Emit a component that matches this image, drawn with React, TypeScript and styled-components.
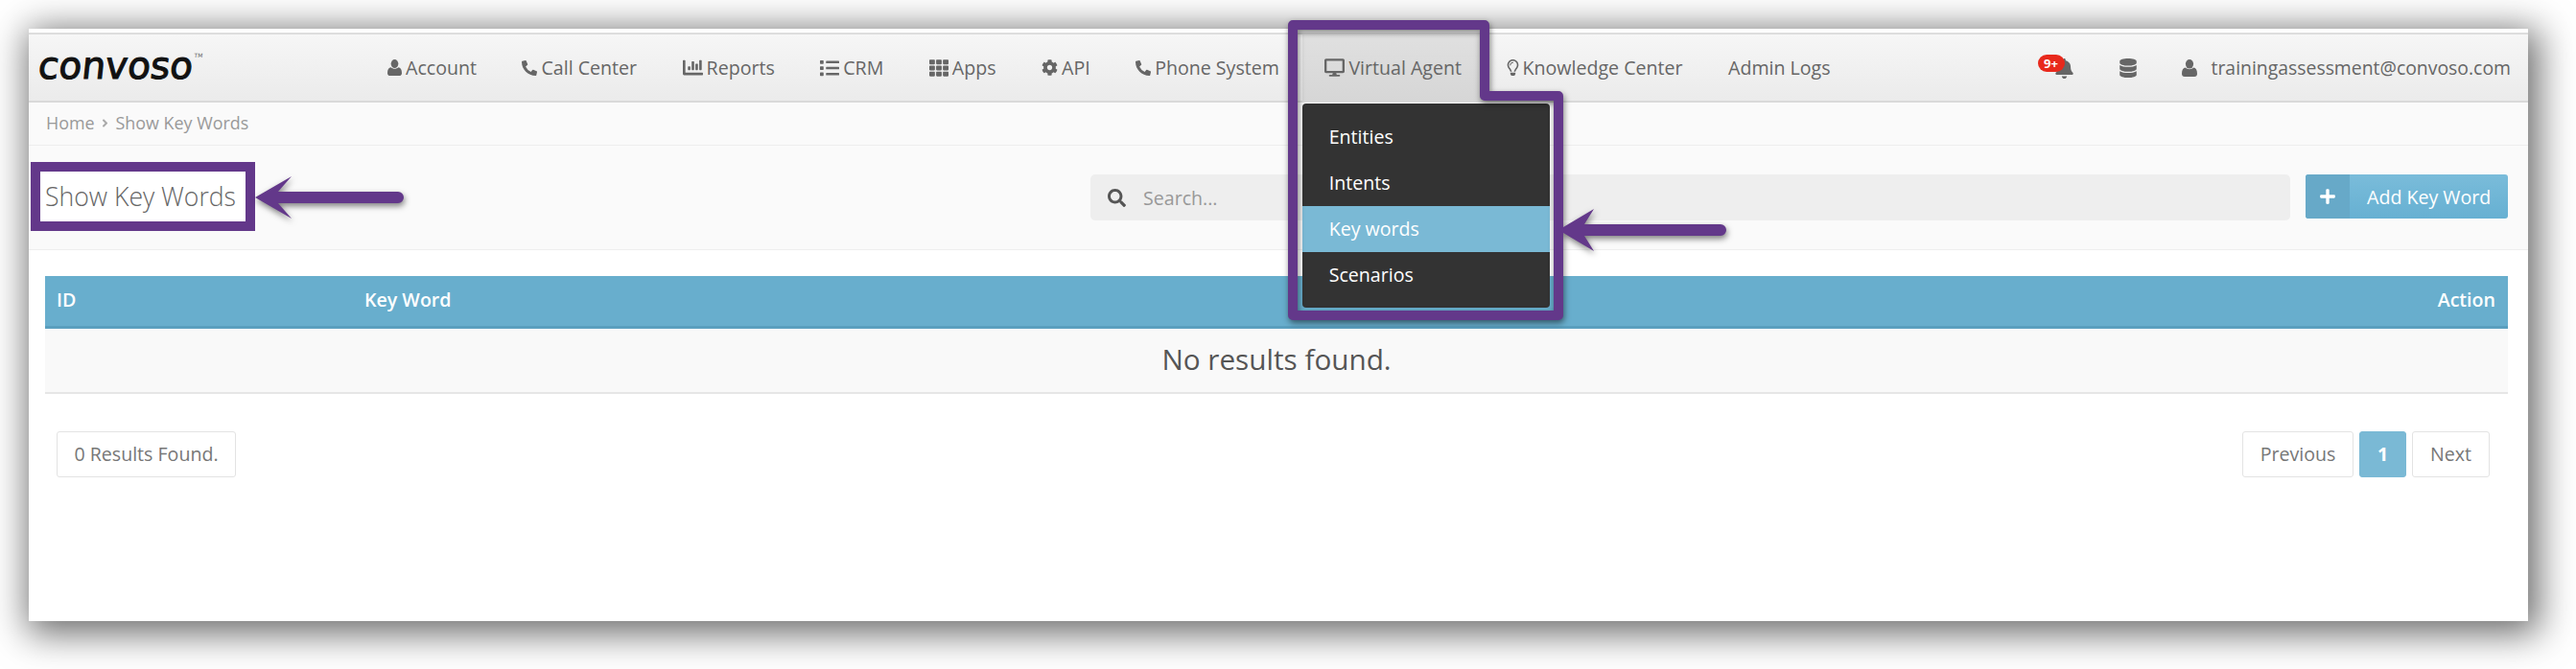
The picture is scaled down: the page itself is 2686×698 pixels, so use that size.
import React from "react";
import styled, { createGlobalStyle } from "styled-components";
import {
  FaPhoneAlt, FaChartBar, FaList, FaTh, FaCog, FaDesktop, FaRegLightbulb,
  FaBell, FaDatabase, FaSearch, FaPlus, FaAngleRight,
} from "react-icons/fa";

const Global = createGlobalStyle`
  html, body { margin: 0; padding: 0; background: #fff; }
  body { width: 2686px; height: 698px; overflow: hidden; font-family: "Open Sans", "Liberation Sans", sans-serif; color: #666; }
  * { box-sizing: border-box; }
`;

const Page = styled.div`
  position: relative;
  width: 2686px;
  height: 698px;
  padding: 30px 50px 50px 30px;
  background: #fff;
`;
const Panel = styled.main`
  height: 618px;
  background: #fff;
  padding-top: 4px;
  box-shadow: 5px 7px 36px 6px rgba(0, 0, 0, 0.58);
`;
const NavBar = styled.header`
  display: flex;
  align-items: center;
  height: 73px;
  padding-right: 18px;
  border-top: 2px solid #ddd;
  border-bottom: 2px solid #d9d9d9;
  background: linear-gradient(#f6f6f6, #ebebeb);
`;
const Logo = styled.div`
  width: 350.25px;
  padding-left: 10px;
  font-family: "DejaVu Sans", sans-serif;
  font-size: 39px;
  line-height: 40px;
  letter-spacing: 0;
  color: #111;
  -webkit-text-stroke: 1.1px #111;
  transform: skewX(-6deg) translateY(-2px);
  white-space: nowrap;
  sup { font-size: 6px; letter-spacing: 0; -webkit-text-stroke: 0; vertical-align: 22px; line-height: 0; color: #666; }
`;
const NavItem = styled.div<{ $active?: boolean }>`
  position: relative;
  display: flex;
  align-items: center;
  gap: 4px;
  height: 100%;
  padding: 0 23.75px;
  font-size: 19.6px;
  white-space: nowrap;
  color: #666;
  background: ${(p) => (p.$active ? "linear-gradient(#e0e0e0, #d6d6d6)" : "none")};
  svg { flex: none; fill: #666; }
`;
const Bulb = styled(FaRegLightbulb)`
  margin: 0 -2px 0 -3px;
`;
const NavRight = styled.div`
  display: flex;
  align-items: center;
  margin-left: auto;
`;
const BellWrap = styled.div`
  position: relative;
  width: 20px;
  height: 20px;
  margin-right: 47px;
  color: #666;
  svg { display: block; }
`;
const Badge = styled.span`
  position: absolute;
  left: -17px;
  top: -4px;
  width: 28px;
  height: 18px;
  border-radius: 9px;
  background: #e8291c;
  color: #fff;
  font-size: 13px;
  font-weight: 700;
  line-height: 18px;
  text-align: center;
`;
const Stack = styled.div`
  display: flex;
  margin-right: 46px;
  color: #666;
`;
const UserName = styled.div`
  display: flex;
  align-items: center;
  gap: 15px;
  font-size: 19.4px;
  color: #666;
`;
const Dropdown = styled.ul`
  position: absolute;
  z-index: 5;
  left: 0;
  top: calc(100% + 3px);
  width: 258px;
  margin: 0;
  padding: 11px 0 10px;
  list-style: none;
  background: #333;
  border-radius: 4px;
`;
const DropItem = styled.li<{ $active?: boolean }>`
  height: 48px;
  padding-left: 28px;
  line-height: 48px;
  font-size: 19.6px;
  color: #fff;
  background: ${(p) => (p.$active ? "#7ab9d5" : "transparent")};
`;
const Crumbs = styled.nav`
  display: flex;
  align-items: center;
  gap: 4px;
  height: 45px;
  padding: 0 0 2px 18px;
  font-size: 17.9px;
  color: #999;
  background: #fafafa;
  border-bottom: 1px solid #eee;
  svg { margin-right: 1px; fill: #aaa; }
`;
const HeadRow = styled.section`
  display: flex;
  align-items: center;
  height: 109px;
  padding: 0 21px 0 2px;
  background: #fafafa;
  border-bottom: 1px solid #eee;
`;
const Title = styled.h1`
  width: 234px;
  height: 72px;
  margin: -2px 0 0;
  padding-left: 5px;
  border: 10px solid #63388a;
  background: #fff;
  font-size: 26.6px;
  font-weight: 300;
  line-height: 52px;
  color: #666;
  white-space: nowrap;
`;
const Search = styled.div`
  display: flex;
  align-items: center;
  gap: 18px;
  width: 1251px;
  height: 48px;
  margin-left: auto;
  padding-left: 18px;
  border-radius: 5px;
  background: #eee;
  font-size: 19.6px;
  color: #999;
  svg { fill: #555; }
`;
const AddButton = styled.div`
  display: flex;
  align-items: stretch;
  width: 211px;
  height: 46px;
  margin: -2px 0 0 16px;
  border-radius: 3px;
  overflow: hidden;
  color: #fff;
  font-size: 19.6px;
  background: linear-gradient(#7abcda, #66b0d2);
`;
const AddIcon = styled.span`
  display: flex;
  align-items: center;
  justify-content: center;
  width: 46px;
  background: #67a9c8;
  svg { fill: #fff; }
`;
const AddLabel = styled.span`
  display: flex;
  align-items: center;
  padding-left: 18px;
  white-space: nowrap;
`;
const TableWrap = styled.section`
  margin: 27px 21px 0 17px;
`;
const TableHead = styled.div`
  display: flex;
  align-items: center;
  height: 55px;
  padding: 0 13px 3px 12px;
  background: #68aecd;
  border-bottom: 3px solid #5a9fbe;
  color: #fff;
  font-size: 19.6px;
  font-weight: 600;
`;
const IdCol = styled.span`
  width: 321px;
`;
const ActionCol = styled.span`
  margin-left: auto;
`;
const EmptyRow = styled.div`
  height: 68px;
  line-height: 64px;
  text-align: center;
  font-size: 29.7px;
  color: #555;
  background: #f9f9f9;
  border-bottom: 2px solid #e6e6e6;
`;
const Footer = styled.div`
  display: flex;
  align-items: flex-start;
  justify-content: space-between;
  padding: 39px 19px 0 12px;
`;
const Count = styled.div`
  width: 187px;
  height: 48px;
  border: 1px solid #e3e3e3;
  border-radius: 3px;
  line-height: 46px;
  text-align: center;
  font-size: 19.6px;
  color: #777;
`;
const Pager = styled.div`
  display: flex;
  gap: 6px;
`;
const PageBtn = styled.div<{ $active?: boolean; $w: number }>`
  width: ${(p) => p.$w}px;
  height: 48px;
  border: 1px solid ${(p) => (p.$active ? "#7ab9d5" : "#e3e3e3")};
  border-radius: 3px;
  line-height: 46px;
  text-align: center;
  font-size: 19.6px;
  font-weight: ${(p) => (p.$active ? 700 : 400)};
  color: ${(p) => (p.$active ? "#fff" : "#777")};
  background: ${(p) => (p.$active ? "#7ab9d5" : "#fff")};
`;
const Annotations = styled.svg`
  position: absolute;
  z-index: 10;
  left: 0;
  top: 0;
  pointer-events: none;
  filter: drop-shadow(1px 3px 3px rgba(0, 0, 0, 0.5));
`;

const UserIcon = ({ w = 16, h = 18 }: { w?: number; h?: number }) => (
  <svg width={w} height={h} viewBox="0 0 16 18" fill="#666">
    <ellipse cx="8" cy="4.8" rx="4.1" ry="4.8" />
    <path d="M0 15c0-4 1.400-6.200 3.900-6.400 1 1 2.500 1.600 4.100 1.600s3.100-.6 4.100-1.600C14.600 8.800 16 11 16 15c0 2-1.200 3-2.800 3H2.800C1.200 18 0 17 0 15z" />
  </svg>
);

const PURPLE = "#63388a";

export default function App() {
  return (
    <Page>
      <Global />
      <Panel>
        <NavBar>
          <Logo>convoso<sup>TM</sup></Logo>
          <NavItem><UserIcon w={15} h={17} />Account</NavItem>
          <NavItem><FaPhoneAlt size={16} />Call Center</NavItem>
          <NavItem><FaChartBar size={21} />Reports</NavItem>
          <NavItem><FaList size={20} />CRM</NavItem>
          <NavItem><FaTh size={20} />Apps</NavItem>
          <NavItem><FaCog size={17} />API</NavItem>
          <NavItem><FaPhoneAlt size={16} />Phone System</NavItem>
          <NavItem $active>
            <FaDesktop size={21} />Virtual Agent
            <Dropdown>
              <DropItem>Entities</DropItem>
              <DropItem>Intents</DropItem>
              <DropItem $active>Key words</DropItem>
              <DropItem>Scenarios</DropItem>
            </Dropdown>
          </NavItem>
          <NavItem><Bulb size={17} />Knowledge Center</NavItem>
          <NavItem>Admin Logs</NavItem>
          <NavRight>
            <BellWrap>
              <FaBell size={21} />
              <Badge>9+</Badge>
            </BellWrap>
            <Stack><FaDatabase size={20} /></Stack>
            <UserName><UserIcon />trainingassessment@convoso.com</UserName>
          </NavRight>
        </NavBar>
        <Crumbs>Home<FaAngleRight size={13} />Show Key Words</Crumbs>
        <HeadRow>
          <Title>Show Key Words</Title>
          <Search><FaSearch size={19} />Search...</Search>
          <AddButton>
            <AddIcon><FaPlus size={18} /></AddIcon>
            <AddLabel>Add Key Word</AddLabel>
          </AddButton>
        </HeadRow>
        <TableWrap>
          <TableHead>
            <IdCol>ID</IdCol>
            <span>Key Word</span>
            <ActionCol>Action</ActionCol>
          </TableHead>
          <EmptyRow>No results found.</EmptyRow>
          <Footer>
            <Count>0 Results Found.</Count>
            <Pager>
              <PageBtn $w={116}>Previous</PageBtn>
              <PageBtn $w={49} $active>1</PageBtn>
              <PageBtn $w={81}>Next</PageBtn>
            </Pager>
          </Footer>
        </TableWrap>
      </Panel>
      <Annotations width="2686" height="698" viewBox="0 0 2686 698">
        <path
          d="M1348 26H1548V100H1625V329H1348Z"
          fill="none"
          stroke={PURPLE}
          strokeWidth="10"
          strokeLinejoin="round"
        />
        <path d="M266 206L304 184L290 200H415a6 6 0 0 1 0 12H290L304 228Z" fill={PURPLE} />
        <path d="M1625 240L1662 218L1652 234H1794a6 6 0 0 1 0 12H1652L1662 262Z" fill={PURPLE} />
      </Annotations>
    </Page>
  );
}
